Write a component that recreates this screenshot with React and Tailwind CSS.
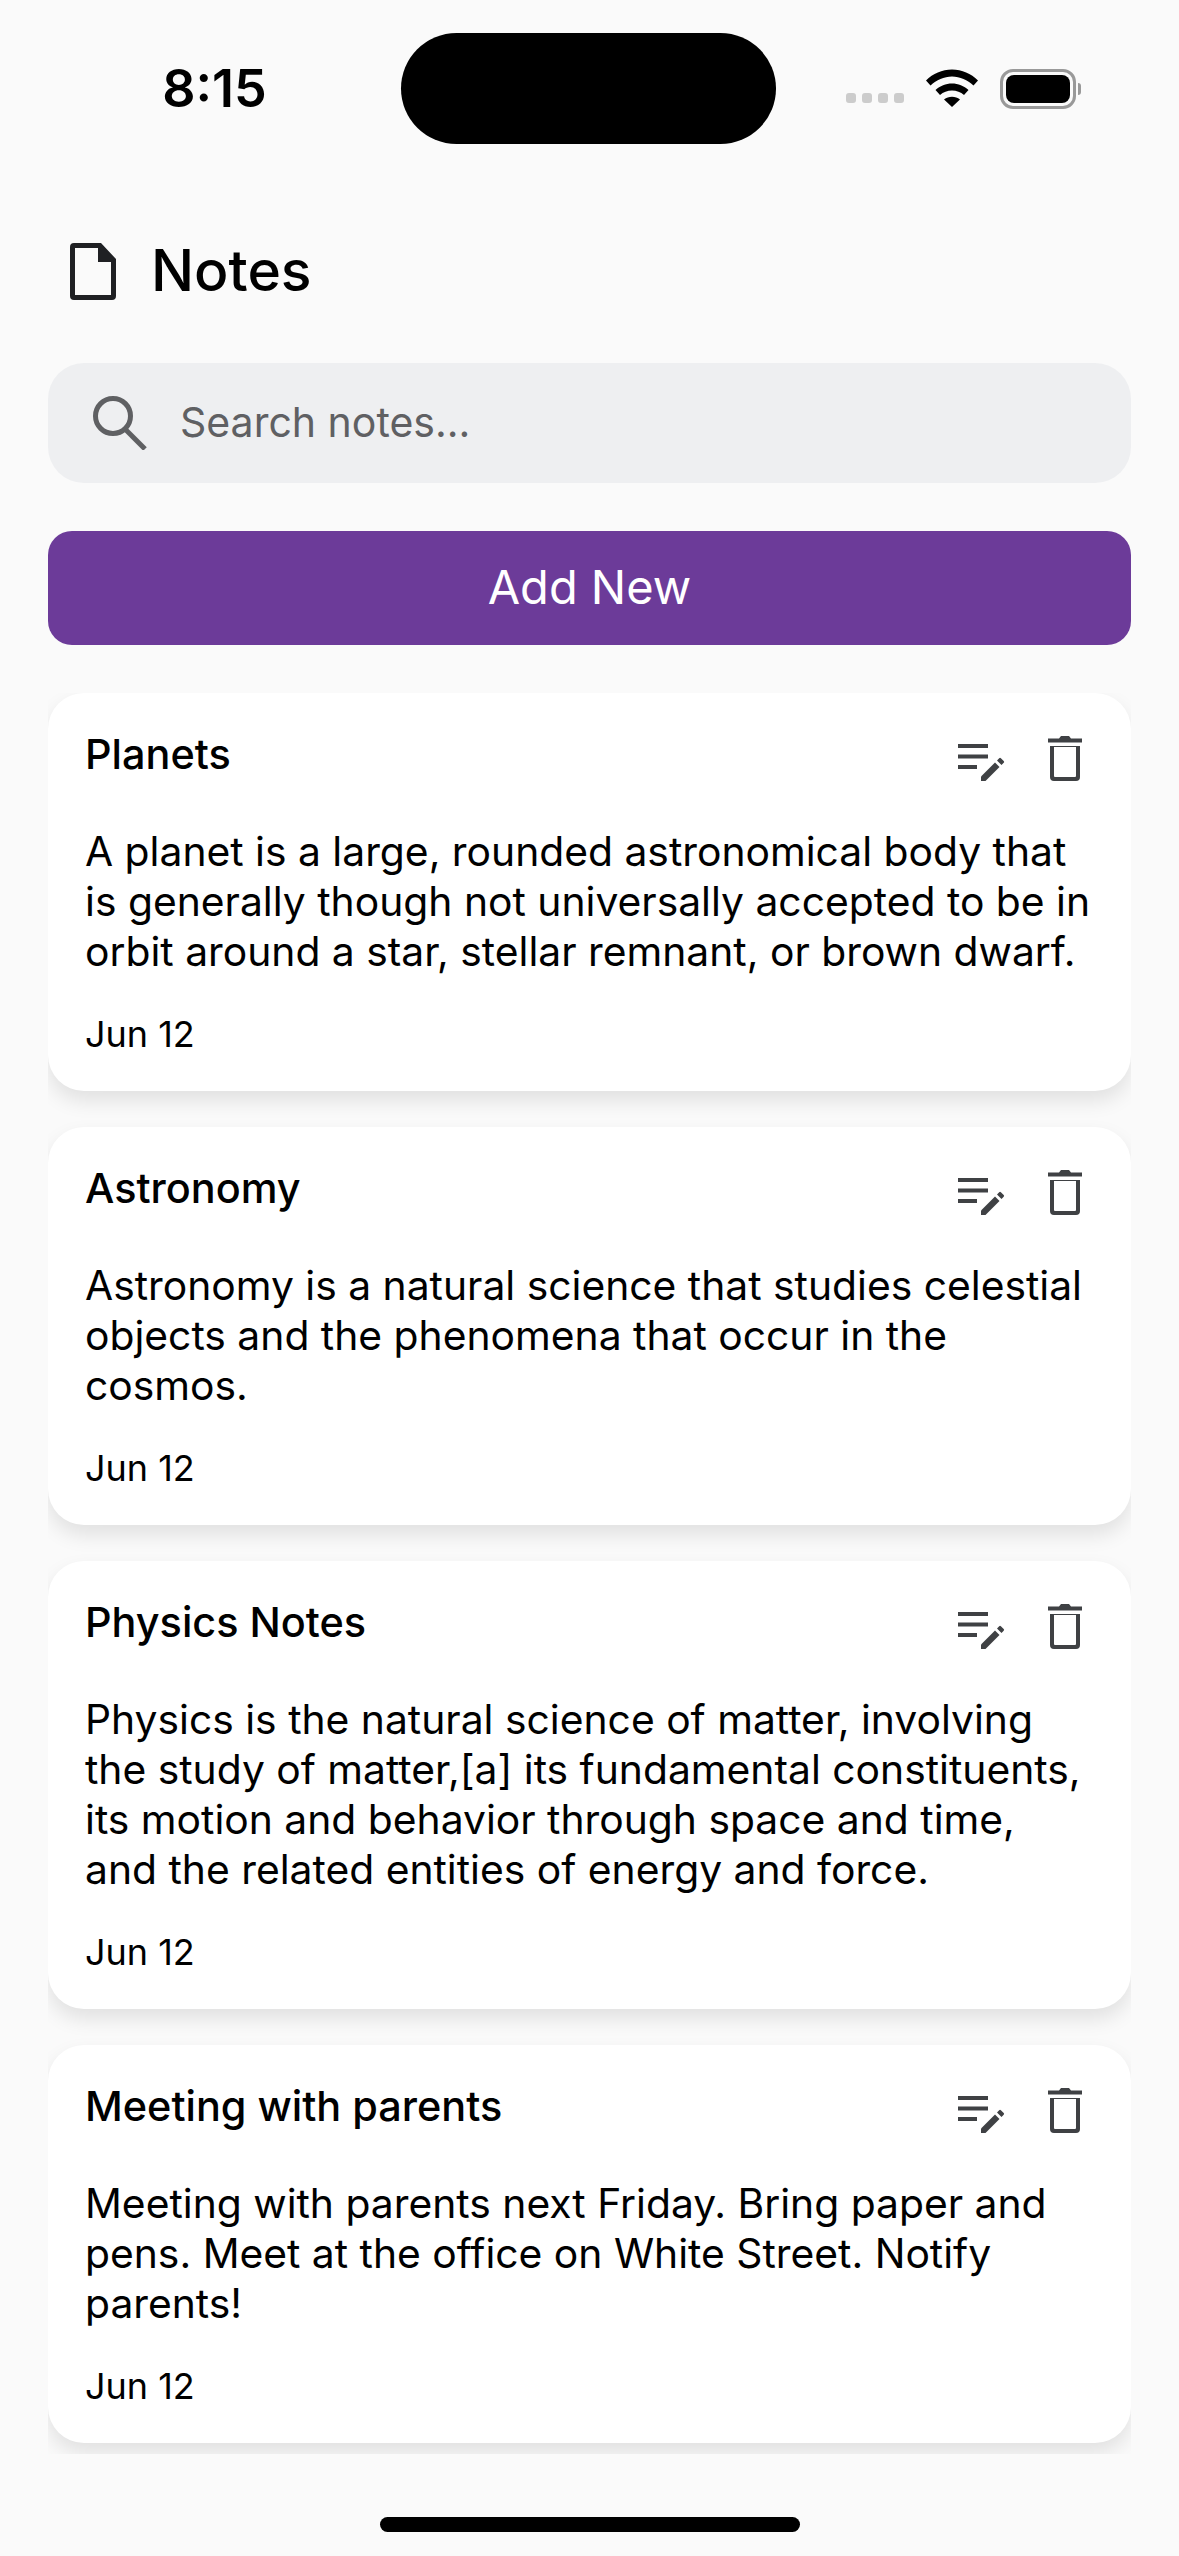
const notes = [
  {
    title: "Planets",
    body: "A planet is a large, rounded astronomical body that is generally though not universally accepted to be in orbit around a star, stellar remnant, or brown dwarf.",
  },
  {
    title: "Astronomy",
    body: "Astronomy is a natural science that studies celestial objects and the phenomena that occur in the cosmos.",
  },
  {
    title: "Physics Notes",
    body: "Physics is the natural science of matter, involving the study of matter,[a] its fundamental constituents, its motion and behavior through space and time, and the related entities of energy and force.",
  },
  {
    title: "Meeting with parents",
    body: "Meeting with parents next Friday. Bring paper and pens. Meet at the office on White Street. Notify parents!",
  },
];

function EditIcon() {
  return (
    <svg viewBox="0 0 48 40" className="h-[40px] w-[48px]" fill="#3f4144">
      <rect x="0" y="0" width="30" height="4" />
      <rect x="0" y="10.500" width="30" height="4" />
      <rect x="0" y="21" width="19" height="4" />
      <path d="M23 37v-4.500L37 18.500l4.500 4.500L27.500 37z" />
      <path d="M39 16.500l2.200-2.200a1.200 1.200 0 0 1 1.700 0l2.800 2.800a1.200 1.200 0 0 1 0 1.700L43.500 21z" />
    </svg>
  );
}

function TrashIcon() {
  return (
    <svg viewBox="0 0 34 46" className="h-[46px] w-[34px]" fill="#3f4144">
      <path d="M11 2.500 13 0h8l2 2.500h11V6.500H0V2.500z" />
      <path
        fillRule="evenodd"
        d="M2 10h30v31a4 4 0 0 1-4 4H6a4 4 0 0 1-4-4zM6 11v29a1 1 0 0 0 1 1h20a1 1 0 0 0 1-1V11z"
      />
    </svg>
  );
}

function NoteCard({ note }) {
  return (
    <div className="rounded-[36px] bg-white px-[37px] pt-[36px] pb-[35px] shadow-[0_10px_20px_rgba(0,0,0,0.1)]">
      <div className="flex items-start justify-between">
        <h2 className="h-[50px] text-[41.400px] leading-[50px] font-medium text-black">{note.title}</h2>
        <div className="mt-[15px] mr-[12px] flex h-[35px] items-start gap-[42px]">
          <EditIcon />
          <div className="-mt-[8px]">
            <TrashIcon />
          </div>
        </div>
      </div>
      <p className="mt-[47px] text-[40.800px] leading-[50px] text-black">{note.body}</p>
      <p className="mt-[36px] text-[36px] leading-[44px] text-black">Jun 12</p>
    </div>
  );
}

export default function App() {
  return (
    <div className="flex h-[2556px] w-[1179px] flex-col overflow-hidden bg-[#fafafa] font-['Inter',sans-serif]">
      <div className="flex h-[144px] items-start pt-[33px]">
        <div className="flex h-[111px] w-[401px] items-center justify-center pl-[28px]">
          <span className="text-[52px] leading-[60px] font-semibold text-black">8:15</span>
        </div>
        <div className="h-[111px] w-[375px] rounded-[56px] bg-black" />
        <div className="flex h-[111px] flex-1 items-center pl-[70px]">
          <div className="mt-[18px] flex gap-[6px]">
            <div className="h-[10px] w-[10px] rounded-[3px] bg-[#cccccc]" />
            <div className="h-[10px] w-[10px] rounded-[3px] bg-[#cccccc]" />
            <div className="h-[10px] w-[10px] rounded-[3px] bg-[#cccccc]" />
            <div className="h-[10px] w-[10px] rounded-[3px] bg-[#cccccc]" />
          </div>
          <svg viewBox="0 0 52 38" className="mb-[2px] ml-[22px] h-[38px] w-[52px]" fill="#000000">
            <path d="M0 11.500C7 4.500 16 .5 26 .5s19 4 26 11l-4.500 5C41.500 11 34 7.500 26 7.500S10.500 11 4.500 16.500z" />
            <path d="M9.500 21C14 17 19.800 14.500 26 14.500S38 17 42.500 21L38 26c-3.300-2.800-7.400-4.500-12-4.500S17.300 23.200 14 26z" />
            <path d="M18 30.500c2.300-1.800 5-2.800 8-2.800s5.700 1 8 2.800L26 38z" />
          </svg>
          <div className="ml-[22px] flex items-center">
            <div className="flex h-[40px] w-[76px] items-center justify-center rounded-[13px] border-[3px] border-[#999999]">
              <div className="h-[28px] w-[64px] rounded-[8px] bg-black" />
            </div>
            <div className="ml-[2px] h-[12px] w-[3px] rounded-r-full bg-[#999999]" />
          </div>
        </div>
      </div>

      <div className="flex flex-col px-[48px]">
        <div className="mt-[92px] flex items-center pl-[22px]">
          <svg viewBox="0 0 46 57" className="h-[57px] w-[46px]" fill="#1f2023">
            <path
              fillRule="evenodd"
              d="M4 0h27l15 16v37a4 4 0 0 1-4 4H4a4 4 0 0 1-4-4V4a4 4 0 0 1 4-4zM5 5v47h36V19H28V5z"
            />
          </svg>
          <h1 className="ml-[35px] text-[57px] leading-[70px] font-medium text-black">Notes</h1>
        </div>

        <div className="mt-[57px] flex h-[120px] items-center rounded-[36px] bg-[#eeeff1] pl-[45px]">
          <svg viewBox="0 0 54 54" className="h-[54px] w-[54px]" fill="none" stroke="#5f6063" strokeWidth="5">
            <circle cx="20" cy="20" r="17.500" />
            <path d="M32 33l20 20" />
          </svg>
          <span className="mb-[2px] ml-[33px] text-[41px] leading-[50px] text-[#5f6063]">Search notes...</span>
        </div>

        <div className="mt-[48px] flex h-[114px] items-center justify-center rounded-[24px] bg-[#6c3b99]">
          <span className="mb-[2px] text-[47px] leading-[56px] font-normal text-white">Add New</span>
        </div>
      </div>

      <div className="mx-[48px] mt-[48px] flex h-[1761px] flex-col gap-[36px] overflow-hidden">
        {notes.map((note) => (
          <NoteCard key={note.title} note={note} />
        ))}
      </div>

      <div className="mt-[63px] flex justify-center">
        <div className="h-[15px] w-[420px] rounded-full bg-black" />
      </div>
    </div>
  );
}
